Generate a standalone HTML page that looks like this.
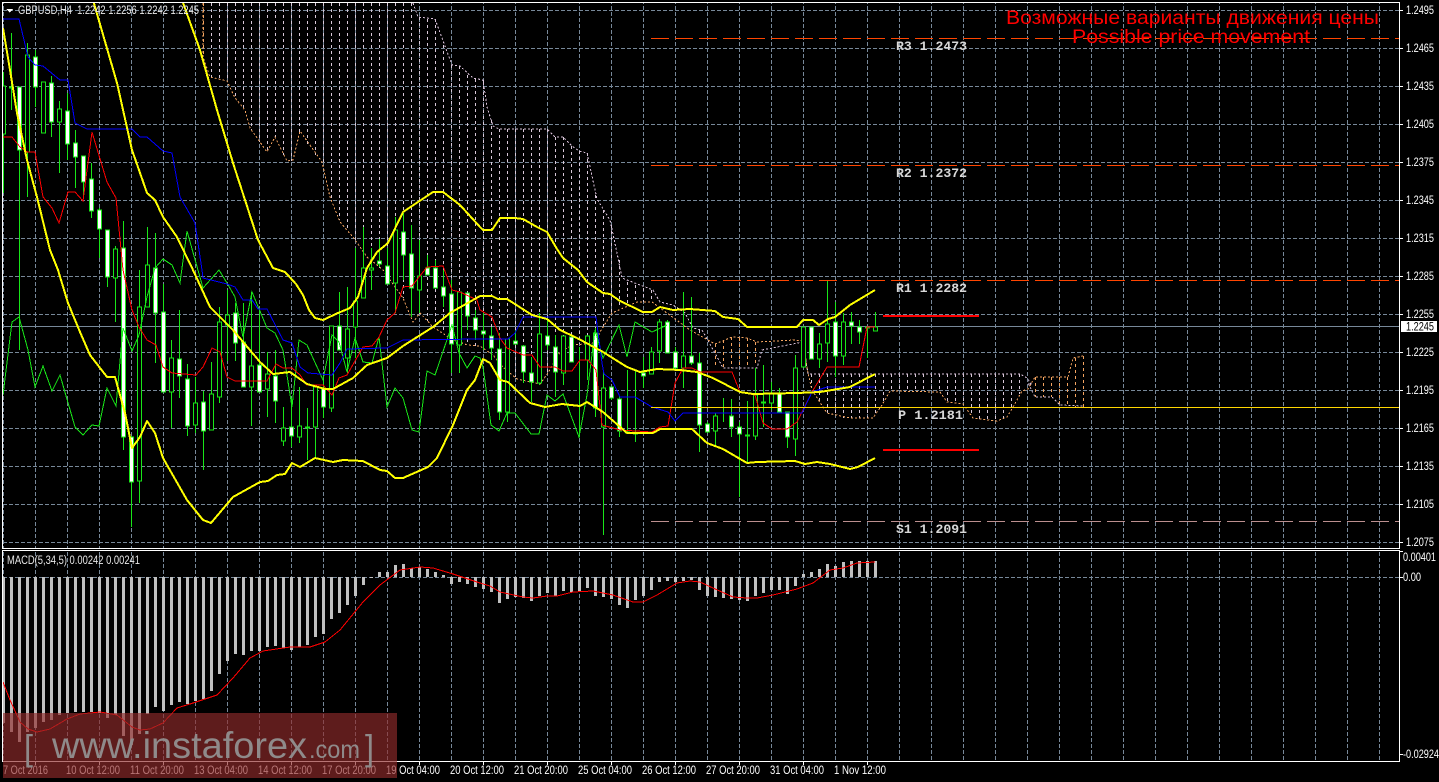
<!DOCTYPE html>
<html lang="en">
<head>
<meta charset="utf-8">
<title>GBPUSD,H4</title>
<style>
html,body{margin:0;padding:0;background:#000;width:1439px;height:782px;overflow:hidden}
svg{display:block}
text{font-family:"Liberation Sans","DejaVu Sans",sans-serif;shape-rendering:auto}
.ax{font-size:11.5px;fill:#fff}
.lv{font-family:"Liberation Mono","DejaVu Sans Mono",monospace;font-size:13px;font-weight:bold;fill:#d8d8d8}
</style>
</head>
<body>
<svg width="1439" height="782" viewBox="0 0 1439 782" xmlns="http://www.w3.org/2000/svg" shape-rendering="crispEdges">
<defs>
<clipPath id="m"><rect x="3" y="3" width="1396" height="545"/></clipPath>
<clipPath id="s"><rect x="3" y="551" width="1396" height="210"/></clipPath>
<pattern id="gv" x="3" y="0" width="32" height="6" patternUnits="userSpaceOnUse"><rect width="1" height="4" fill="#778899"/></pattern>
<pattern id="gh" x="3" y="10" width="6" height="38" patternUnits="userSpaceOnUse"><rect width="4" height="1" fill="#778899"/></pattern>
</defs>
<rect width="1439" height="782" fill="#000"/>

<!-- grid -->
<rect x="3" y="3" width="1396" height="545" fill="url(#gv)"/>
<rect x="3" y="10" width="1396" height="533" fill="url(#gh)"/>
<rect x="3" y="551" width="1396" height="210" fill="url(#gv)"/>
<path d="M3 577.5H1399" stroke="#778899" stroke-dasharray="4 2" fill="none"/>

<g clip-path="url(#m)" fill="none">
<!-- bid line -->
<path d="M3 326.5H1399" stroke="#778899"/>
<!-- cloud hatch -->
<path stroke="#d8c8d8" stroke-dasharray="3 3" d="M211.5 3V78M219.5 3V79M227.5 3V81M235.5 3V98M243.5 3V108M251.5 3V130M259.5 3V142M267.5 3V152M275.5 3V137M283.5 3V155M291.5 3V161M299.5 3V135M307.5 3V145M315.5 3V155M323.5 3V163M331.5 3V199M339.5 3V220M347.5 3V230M355.5 3V240M363.5 3V252M371.5 3V262M379.5 3V268M387.5 3V277M395.5 3V287M403.5 3V298M411.5 3V316M419.5 17V314M427.5 19V321M435.5 19V327M443.5 45V333M451.5 65V338M459.5 66V343M467.5 75V345M475.5 79V346M483.5 80V346M491.5 120V352M499.5 129V362M507.5 129V370M515.5 129V377M523.5 129V380M531.5 129V383M539.5 129V384M547.5 129V375M555.5 137V360M563.5 137V350M571.5 146V345M579.5 151V344M587.5 153V343M595.5 195V343M603.5 210V326M611.5 225V314M619.5 260V307M627.5 282V304M635.5 285V302M643.5 288V302M651.5 290V302M683.5 310V325M691.5 325V330M699.5 330V336M811.5 374V388M819.5 374V404M827.5 374V413M835.5 374V416M843.5 374V418M851.5 374V418M859.5 374V418M867.5 374V418M875.5 374V413M883.5 374V403M891.5 374V391M899.5 374V391M907.5 374V392M915.5 374V392M923.5 374V392M931.5 374V392M939.5 374V392M947.5 374V402M955.5 374V403M963.5 374V404M971.5 374V415M979.5 374V420M987.5 374V421M995.5 374V421M1003.5 374V419M1011.5 374V410M1019.5 374V394"/>
<path stroke="#f4a460" stroke-dasharray="3 3" d="M203.5 3V57M715.5 344V368M723.5 340V368M731.5 337V368M739.5 338V368M747.5 338V368M755.5 342V365M1035.5 377V397M1043.5 377V397M1051.5 377V397M1059.5 377V405M1067.5 377V405M1075.5 358V407M1083.5 356V407"/>
<!-- senkou B -->
<polyline stroke="#d8bfd8" stroke-dasharray="2 2" points="413,3 418,17 435,19 452,65 460,66 473,78 483,80 487,107 493,126 499,129 547,129 555,137 563,137 572,146 579,151 587,153 597,199 610,220 617,253 622,278 653,290 660,302 673,305 685,313 693,328 702,330 715,353 723,368 757,368 762,350 803,342 808,374 1020,374 1027,378 1032,385 1028,383 1035,397 1052,397 1060,405 1083,406"/>
<!-- senkou A -->
<polyline stroke="#f4a460" stroke-dasharray="2 2" points="203,3 203,57 210,77 227,81 235,98 245,110 250,128 267,152 275,137 287,161 293,160 300,131 322,162 330,197 340,222 353,237 367,257 383,270 403,298 413,322 420,313 433,327 450,338 467,345 480,346 493,355 503,367 517,379 540,384 548,373 560,352 573,345 595,343 600,332 612,313 637,302 652,302 690,330 715,344 732,337 747,338 757,342 795,340 803,341 808,373 812,390 827,413 850,418 873,418 882,405 890,391 940,392 947,402 963,404 973,418 997,421 1007,417 1013,407 1022,391 1028,389 1035,377 1068,377 1073,358 1083,356"/>

<!-- wicks -->
<path stroke="#18e618" d="M3.5 72V193M11.5 33V110M19.5 87V350M27.5 43V197M35.5 50V107M43.5 82V133M51.5 76V137M59.5 101V173M67.5 93V160M75.5 130V188M83.5 156V197M91.5 163V218M99.5 208V258M107.5 230V287M115.5 246V322M123.5 221V450M131.5 436V527M139.5 270V503M147.5 227V307M155.5 233V363M163.5 284V392M171.5 340V428M179.5 310V398M187.5 364V436M195.5 377V433M203.5 391V470M211.5 362V430M219.5 307V403M227.5 290V361M235.5 303V361M243.5 303V387M251.5 292V426M259.5 310V392M267.5 352V417M275.5 350V423M283.5 407V446M291.5 398V447M299.5 387V443M307.5 408V460M315.5 387V458M323.5 380V418M331.5 326V412M339.5 292V350M347.5 287V373M355.5 248V358M363.5 227V298M371.5 248V290M379.5 239V267M387.5 248V284M395.5 217V313M403.5 213V280M411.5 225V317M419.5 240V313M427.5 255V275M435.5 260V288M443.5 270V307M451.5 280V373M459.5 292V373M467.5 293V330M475.5 310V340M483.5 313V350M491.5 327V360M499.5 333V420M507.5 339V422M515.5 330V345M523.5 345V383M531.5 357V402M539.5 313V385M547.5 318V350M555.5 335V397M563.5 336V385M571.5 337V362M579.5 347V437M587.5 335V380M595.5 328V417M603.5 370V535M611.5 387V400M619.5 396V437M627.5 370V433M635.5 370V442M643.5 357V388M651.5 347V374M659.5 319V363M667.5 320V353M675.5 347V368M683.5 292V388M691.5 297V365M699.5 353V452M707.5 422V433M715.5 413V445M723.5 398V422M731.5 399V437M739.5 422V497M747.5 401V463M755.5 368V440M763.5 365V427M771.5 382V410M779.5 388V412M787.5 412V448M795.5 355V456M803.5 327V367M811.5 327V359M819.5 333V368M827.5 280V362M835.5 302V377M843.5 313V365M851.5 312V344M859.5 320V344M867.5 327V358M875.5 312V331"/>
<!-- bear bodies -->
<path fill="#fff" stroke="#18e618" d="M17.5 87h4V150h-4zM33.5 57h4V87h-4zM49.5 83h4V122h-4zM65.5 111h4V144h-4zM73.5 143h4V157h-4zM81.5 156h4V182h-4zM89.5 179h4V211h-4zM97.5 210h4V229h-4zM105.5 230h4V277h-4zM121.5 248h4V437h-4zM129.5 437h4V482h-4zM153.5 268h4V313h-4zM161.5 312h4V392h-4zM177.5 359h4V376h-4zM185.5 379h4V426h-4zM201.5 402h4V431h-4zM233.5 313h4V343h-4zM241.5 342h4V387h-4zM257.5 365h4V392h-4zM273.5 376h4V401h-4zM289.5 427h4V436h-4zM321.5 388h4V407h-4zM337.5 326h4V350h-4zM377.5 261h4V264h-4zM385.5 266h4V284h-4zM401.5 232h4V255h-4zM409.5 254h4V288h-4zM425.5 268h4V275h-4zM433.5 268h4V288h-4zM441.5 287h4V296h-4zM449.5 294h4V344h-4zM465.5 293h4V316h-4zM473.5 318h4V330h-4zM481.5 331h4V334h-4zM489.5 336h4V348h-4zM497.5 349h4V412h-4zM513.5 341h4V344h-4zM521.5 346h4V372h-4zM529.5 373h4V382h-4zM545.5 336h4V345h-4zM553.5 347h4V372h-4zM569.5 337h4V362h-4zM593.5 333h4V408h-4zM609.5 387h4V398h-4zM617.5 399h4V431h-4zM641.5 373h4V376h-4zM665.5 322h4V353h-4zM673.5 352h4V368h-4zM689.5 356h4V363h-4zM697.5 363h4V425h-4zM705.5 424h4V432h-4zM729.5 416h4V427h-4zM737.5 427h4V434h-4zM777.5 394h4V412h-4zM785.5 412h4V437h-4zM809.5 327h4V359h-4zM833.5 322h4V356h-4zM849.5 322h4V326h-4zM857.5 327h4V332h-4z"/>
<!-- bull bodies -->
<path fill="#000" stroke="#18e618" d="M1.5 86h4V134h-4zM25.5 55h4V152h-4zM41.5 82h4V133h-4zM57.5 109h4V122h-4zM113.5 249h4V278h-4zM137.5 307h4V481h-4zM145.5 265h4V307h-4zM169.5 358h4V392h-4zM193.5 403h4V425h-4zM209.5 394h4V430h-4zM217.5 322h4V397h-4zM225.5 315h4V325h-4zM249.5 366h4V387h-4zM265.5 374h4V389h-4zM281.5 428h4V441h-4zM297.5 426h4V437h-4zM313.5 387h4V427h-4zM329.5 326h4V408h-4zM345.5 329h4V358h-4zM353.5 301h4V327h-4zM361.5 268h4V298h-4zM369.5 268h4V270h-4zM393.5 230h4V283h-4zM417.5 276h4V290h-4zM457.5 292h4V345h-4zM505.5 339h4V412h-4zM537.5 334h4V383h-4zM561.5 336h4V373h-4zM585.5 336h4V360h-4zM601.5 388h4V427h-4zM649.5 352h4V374h-4zM657.5 322h4V351h-4zM681.5 356h4V368h-4zM713.5 416h4V431h-4zM753.5 395h4V436h-4zM769.5 394h4V403h-4zM793.5 368h4V439h-4zM801.5 327h4V367h-4zM817.5 344h4V359h-4zM825.5 324h4V343h-4zM841.5 322h4V356h-4zM873.5 327h4V331h-4zM9.5 87h4v1h-4zM305.5 427h4v1h-4zM625.5 432h4v1h-4zM633.5 433h4v1h-4zM745.5 435h4v1h-4zM761.5 402h4v1h-4zM865.5 327h4v1h-4z"/>

<!-- chikou green -->
<polyline stroke="#18e618" points="3,395 12,322 19,317 28,350 35,387 43,366 52,391 60,375 75,427 83,435 92,425 99,426 107,388 116,406 123,328 132,351 139,335 147,297 155,268 163,259 172,265 180,283 187,231 203,288 219,270 227,283 235,297 243,337 252,292 267,328 275,333 283,350 292,407 299,340 307,345 323,380 332,335 339,342 347,372 355,338 363,362 372,363 379,337 387,407 395,388 403,398 412,430 419,432 427,371 435,375 452,325 459,353 467,368 475,356 480,358 483,367 491,425 499,431 507,413 515,413 531,434 539,434 547,395 555,401 563,394 579,437 587,395 595,330 603,358 619,325 627,357 635,322 652,332 667,325"/>
<!-- red tenkan -->
<polyline stroke="#f00" points="3,137 12,137 20,147 27,152 35,152 43,197 52,208 59,223 68,192 75,192 83,201 92,132 107,182 116,198 123,270 132,310 139,327 147,340 156,345 163,367 172,373 196,375 203,367 212,348 220,352 227,377 235,381 267,381 276,364 283,368 292,368 300,375 307,385 323,385 332,395 339,378 347,375 363,347 372,346 379,337 387,320 395,313 403,287 412,286 427,267 443,266 452,290 460,292 477,300 480,310 492,317 500,338 507,348 523,355 532,355 540,367 555,367 563,371 572,371 580,360 588,360 596,370 602,425 620,430 652,432 660,427 668,426 675,383 683,368 692,368 700,372 732,372 740,392 755,395 763,423 772,429 787,429 797,422 812,392 827,367 859,367 867,327 875,327"/>
<!-- blue kijun -->
<polyline stroke="#0000ff" points="3,19 19,19 28,57 35,65 43,66 60,80 68,80 75,123 87,129 132,129 140,137 147,137 163,151 172,153 180,197 195,223 202,270 203,278 227,284 235,287 243,300 252,300 258,309 267,309 283,340 292,343 300,367 308,373 332,375 340,363 347,349 387,348 403,340 480,339 508,339 515,333 523,317 596,317 602,363 604,374 612,380 620,397 635,397 652,407 668,412 675,421 683,413 802,413 812,392 827,387 875,387"/>
<!-- bollinger -->
<g stroke="#ffff00" stroke-width="2" stroke-linejoin="round">
<polyline points="182,0 200,50 217,110 233,163 258,240 273,268 285,272 296,284 303,295 309,310 315,318 323,320 338,313 350,308 358,297 367,268 377,252 388,243 403,212 433,192 443,192 460,205 480,227 483,230 492,230 500,218 515,218 523,219 537,227 547,232 557,249 563,258 578,270 587,282 603,293 610,294 620,301 643,312 652,312 660,307 673,310 690,309 715,311 723,317 738,319 747,327 797,327 803,320 813,320 819,325 828,319 835,317 850,305 875,290"/>
<polyline points="93,0 117,83 132,150 147,193 155,200 163,217 177,237 193,270 210,307 233,330 260,362 273,374 290,372 307,384 325,389 333,389 353,378 367,365 387,358 403,346 433,327 450,313 473,300 480,296 492,296 498,299 507,299 532,315 547,319 560,330 577,338 603,352 627,367 640,372 657,369 680,370 697,372 713,378 740,392 753,394 797,393 820,392 850,387 875,374"/>
<polyline points="3,28 10,70 17,113 27,160 37,197 50,250 58,270 68,303 80,332 90,355 107,377 115,377 125,413 132,448 140,437 147,421 155,433 163,458 187,500 203,520 211,523 233,497 260,482 268,481 277,475 285,474 292,463 300,467 315,458 333,462 343,460 363,461 380,470 387,471 395,478 403,478 428,467 437,458 453,425 467,390 475,380 480,367 483,359 490,363 500,380 508,382 530,403 545,407 562,404 580,406 587,402 603,412 627,433 653,433 660,429 692,429 707,443 723,449 747,463 757,462 795,461 805,464 817,462 830,464 850,469 858,467 875,458"/>
</g>

<!-- levels -->
<path stroke="#ff4500" stroke-dasharray="18 6" d="M651 38.5H1399M651 165.5H1399M651 280.5H1399"/>
<path stroke="#ffd700" d="M651 407.5H1399"/>
<path stroke="#bc8f8f" stroke-dasharray="18 6" d="M651 521.5H1399"/>
<path stroke="#f00" stroke-width="2" d="M883 316H979M883 450H979"/>
</g>

<!-- level labels -->
<text class="lv" x="896" y="50" textLength="71" lengthAdjust="spacingAndGlyphs">R3 1.2473</text>
<text class="lv" x="896" y="177" textLength="71" lengthAdjust="spacingAndGlyphs">R2 1.2372</text>
<text class="lv" x="896" y="292" textLength="71" lengthAdjust="spacingAndGlyphs">R1 1.2282</text>
<text class="lv" x="898" y="419" textLength="65" lengthAdjust="spacingAndGlyphs">P 1.2181</text>
<text class="lv" x="896" y="533" textLength="71" lengthAdjust="spacingAndGlyphs">S1 1.2091</text>

<!-- red title -->
<text x="1006" y="24" font-size="19.5" fill="#ff0000" textLength="373" lengthAdjust="spacingAndGlyphs">Возможные варианты движения цены</text>
<text x="1072" y="43" font-size="19.5" fill="#ff0000" textLength="238" lengthAdjust="spacingAndGlyphs">Possible price movement</text>

<!-- MACD -->
<g clip-path="url(#s)" fill="none">
<path stroke="#c0c0c0" stroke-width="3" d="M3.5 577V723M11.5 577V732M19.5 577V742M27.5 577V732M35.5 577V728M43.5 577V722M51.5 577V720M59.5 577V715M67.5 577V713M75.5 577V712M83.5 577V712M91.5 577V712M99.5 577V713M107.5 577V718M115.5 577V715M123.5 577V736M131.5 577V745M139.5 577V734M147.5 577V714M155.5 577V707M163.5 577V711M171.5 577V705M179.5 577V702M187.5 577V704M195.5 577V701M203.5 577V699M211.5 577V691M219.5 577V674M227.5 577V661M235.5 577V654M243.5 577V655M251.5 577V651M259.5 577V651M267.5 577V647M275.5 577V646M283.5 577V648M291.5 577V650M299.5 577V647M307.5 577V645M315.5 577V637M323.5 577V634M331.5 577V619M339.5 577V613M347.5 577V605M355.5 577V596M363.5 577V585M371.5 577V578M379.5 577V572M387.5 577V572M395.5 577V565M403.5 577V564M411.5 577V568M419.5 577V567M427.5 577V569M435.5 577V572M443.5 577V575M451.5 577V584M459.5 577V582M467.5 577V584M475.5 577V587M483.5 577V589M491.5 577V592M499.5 577V603M507.5 577V599M515.5 577V597M523.5 577V598M531.5 577V601M539.5 577V596M547.5 577V593M555.5 577V596M563.5 577V591M571.5 577V592M579.5 577V592M587.5 577V588M595.5 577V596M603.5 577V597M611.5 577V599M619.5 577V605M627.5 577V608M635.5 577V600M643.5 577V596M651.5 577V590M659.5 577V582M667.5 577V581M675.5 577V582M683.5 577V581M691.5 577V580M699.5 577V590M707.5 577V596M715.5 577V597M723.5 577V598M731.5 577V599M739.5 577V600M747.5 577V601M755.5 577V596M763.5 577V593M771.5 577V590M779.5 577V590M787.5 577V594M795.5 577V586M803.5 577V574M811.5 577V572M819.5 577V569M827.5 577V564M835.5 577V566M843.5 577V562M851.5 577V561M859.5 577V561M867.5 577V561M875.5 577V561"/>
<polyline stroke="#ff0000" points="3,682 10,700 20,722 28,729 37,732 50,729 67,719 80,714 100,712 117,715 132,727 140,730 150,729 163,723 177,708 190,704 217,695 233,678 250,658 263,651 290,647 310,647 325,642 340,630 363,602 380,585 400,570 420,567 433,568 453,574 480,583 490,586 500,592 523,597 533,598 547,596 557,596 573,592 593,591 613,595 633,602 643,602 657,595 677,583 690,581 700,582 713,588 733,597 747,598 757,598 773,595 797,589 813,583 830,570 843,568 857,563 875,562"/>
</g>

<!-- frame -->
<path stroke="#fff" fill="none" d="M2.5 2.5H1399.5V548.5H2.5ZM2.5 550.5H1399.5V761.5H2.5Z"/>
<path stroke="#fff" fill="none" d="M35.5 762v3M99.5 762v3M163.5 762v3M227.5 762v3M291.5 762v3M355.5 762v3M419.5 762v3M483.5 762v3M547.5 762v3M611.5 762v3M675.5 762v3M739.5 762v3M803.5 762v3M867.5 762v3M1400 10.5h3M1400 48.5h3M1400 86.5h3M1400 124.5h3M1400 162.5h3M1400 200.5h3M1400 238.5h3M1400 276.5h3M1400 314.5h3M1400 352.5h3M1400 390.5h3M1400 428.5h3M1400 466.5h3M1400 504.5h3M1400 542.5h3M1400 551.5h3M1400 577.5h3M1400 754.5h3"/>

<!-- header -->
<path d="M6 9h7l-3.5 3.5z" fill="#fff"/>
<text x="18" y="14" font-size="11.5" fill="#e8e8e8" textLength="181" lengthAdjust="spacingAndGlyphs">GBPUSD,H4&#160;&#160;1.2242 1.2256 1.2242 1.2245</text>
<text x="7" y="564" font-size="11.5" fill="#e8e8e8" textLength="133" lengthAdjust="spacingAndGlyphs">MACD(5,34,5) 0.00242 0.00241</text>

<!-- price axis -->
<text class="ax" x="1406" y="14" textLength="28" lengthAdjust="spacingAndGlyphs">1.2495</text>
<text class="ax" x="1406" y="52" textLength="28" lengthAdjust="spacingAndGlyphs">1.2465</text>
<text class="ax" x="1406" y="90" textLength="28" lengthAdjust="spacingAndGlyphs">1.2435</text>
<text class="ax" x="1406" y="128" textLength="28" lengthAdjust="spacingAndGlyphs">1.2405</text>
<text class="ax" x="1406" y="166" textLength="28" lengthAdjust="spacingAndGlyphs">1.2375</text>
<text class="ax" x="1406" y="204" textLength="28" lengthAdjust="spacingAndGlyphs">1.2345</text>
<text class="ax" x="1406" y="242" textLength="28" lengthAdjust="spacingAndGlyphs">1.2315</text>
<text class="ax" x="1406" y="280" textLength="28" lengthAdjust="spacingAndGlyphs">1.2285</text>
<text class="ax" x="1406" y="318" textLength="28" lengthAdjust="spacingAndGlyphs">1.2255</text>
<text class="ax" x="1406" y="356" textLength="28" lengthAdjust="spacingAndGlyphs">1.2225</text>
<text class="ax" x="1406" y="394" textLength="28" lengthAdjust="spacingAndGlyphs">1.2195</text>
<text class="ax" x="1406" y="432" textLength="28" lengthAdjust="spacingAndGlyphs">1.2165</text>
<text class="ax" x="1406" y="470" textLength="28" lengthAdjust="spacingAndGlyphs">1.2135</text>
<text class="ax" x="1406" y="508" textLength="28" lengthAdjust="spacingAndGlyphs">1.2105</text>
<text class="ax" x="1406" y="546" textLength="28" lengthAdjust="spacingAndGlyphs">1.2075</text>
<text class="ax" x="1403" y="561" textLength="33" lengthAdjust="spacingAndGlyphs">0.00401</text>
<text class="ax" x="1403" y="581" textLength="18" lengthAdjust="spacingAndGlyphs">0.00</text>
<text class="ax" x="1403" y="758" textLength="36" lengthAdjust="spacingAndGlyphs">-0.02924</text>
<rect x="1401" y="321" width="36" height="11" fill="#fff"/>
<text x="1406" y="330.5" font-size="11.5" fill="#000" textLength="28" lengthAdjust="spacingAndGlyphs">1.2245</text>

<!-- time axis -->
<text class="ax" x="3" y="774" textLength="45" lengthAdjust="spacingAndGlyphs">7 Oct 2016</text>
<text class="ax" x="66" y="774" textLength="54" lengthAdjust="spacingAndGlyphs">10 Oct 12:00</text>
<text class="ax" x="130" y="774" textLength="54" lengthAdjust="spacingAndGlyphs">11 Oct 20:00</text>
<text class="ax" x="194" y="774" textLength="54" lengthAdjust="spacingAndGlyphs">13 Oct 04:00</text>
<text class="ax" x="258" y="774" textLength="54" lengthAdjust="spacingAndGlyphs">14 Oct 12:00</text>
<text class="ax" x="322" y="774" textLength="54" lengthAdjust="spacingAndGlyphs">17 Oct 20:00</text>
<text class="ax" x="386" y="774" textLength="54" lengthAdjust="spacingAndGlyphs">19 Oct 04:00</text>
<text class="ax" x="450" y="774" textLength="54" lengthAdjust="spacingAndGlyphs">20 Oct 12:00</text>
<text class="ax" x="514" y="774" textLength="54" lengthAdjust="spacingAndGlyphs">21 Oct 20:00</text>
<text class="ax" x="578" y="774" textLength="54" lengthAdjust="spacingAndGlyphs">25 Oct 04:00</text>
<text class="ax" x="642" y="774" textLength="54" lengthAdjust="spacingAndGlyphs">26 Oct 12:00</text>
<text class="ax" x="706" y="774" textLength="54" lengthAdjust="spacingAndGlyphs">27 Oct 20:00</text>
<text class="ax" x="770" y="774" textLength="54" lengthAdjust="spacingAndGlyphs">31 Oct 04:00</text>
<text class="ax" x="834" y="774" textLength="52" lengthAdjust="spacingAndGlyphs">1 Nov 12:00</text>

<!-- watermark -->
<rect x="3" y="713" width="394" height="65" fill="#912b2b" fill-opacity=".65"/>
<g fill="#8f8a8a">
<text x="24" y="760" font-size="36" textLength="9" lengthAdjust="spacingAndGlyphs">[</text>
<text x="52" y="758" font-size="37" textLength="255" lengthAdjust="spacingAndGlyphs">www.instaforex</text>
<text x="309" y="758" font-size="25" textLength="51" lengthAdjust="spacingAndGlyphs">.com</text>
<text x="365" y="760" font-size="36" textLength="9" lengthAdjust="spacingAndGlyphs">]</text>
</g>
</svg>
</body>
</html>
